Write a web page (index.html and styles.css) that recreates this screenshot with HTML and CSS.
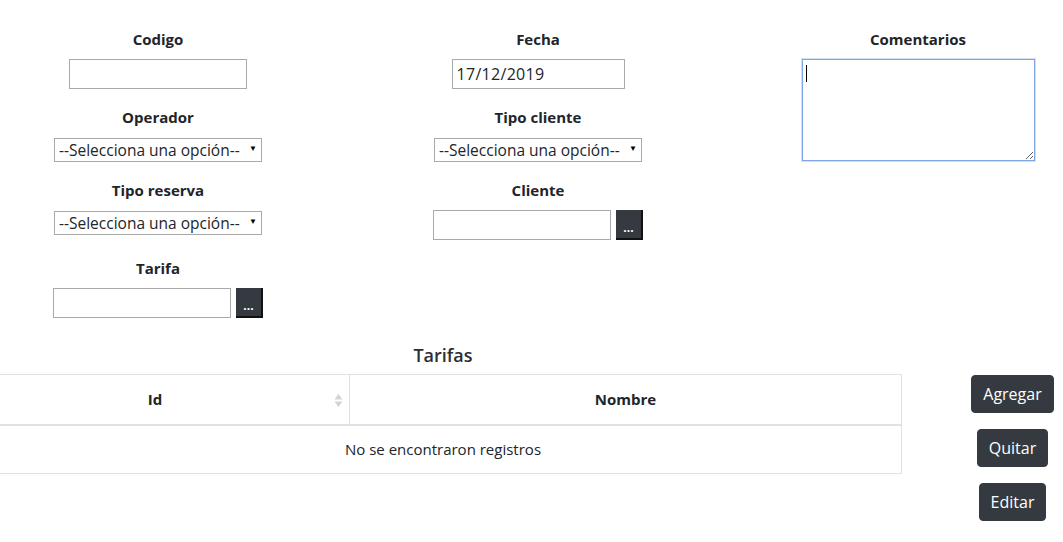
FILE: index.html
```html
<!DOCTYPE html>
<html lang="es">
<head>
<meta charset="utf-8">
<title>Reserva</title>
<link rel="stylesheet" href="styles.css">
</head>
<body>
<div class="page">
  <form class="form-grid">
    <div class="field c1 r1">
      <label class="lbl">Codigo</label>
      <input class="txt w178" type="text">
    </div>
    <div class="field c2 r1">
      <label class="lbl">Fecha</label>
      <input class="txt w173 date" type="text" value="17/12/2019">
    </div>
    <div class="field c3 rspan">
      <label class="lbl">Comentarios</label>
      <div class="ta-wrap">
        <textarea class="ta"></textarea>
        <span class="caret"></span>
      </div>
    </div>
    <div class="field c1 r2">
      <label class="lbl">Operador</label>
      <div class="sel-wrap">
        <select class="sel"><option>--Selecciona una opción--</option></select>
        <span class="arrow">&#9660;</span>
      </div>
    </div>
    <div class="field c2 r2">
      <label class="lbl">Tipo cliente</label>
      <div class="sel-wrap">
        <select class="sel"><option>--Selecciona una opción--</option></select>
        <span class="arrow">&#9660;</span>
      </div>
    </div>
    <div class="field c1 r3">
      <label class="lbl">Tipo reserva</label>
      <div class="sel-wrap">
        <select class="sel"><option>--Selecciona una opción--</option></select>
        <span class="arrow">&#9660;</span>
      </div>
    </div>
    <div class="field c2 r3">
      <label class="lbl">Cliente</label>
      <div class="group">
        <input class="txt w178" type="text">
        <button type="button" class="dots">...</button>
      </div>
    </div>
    <div class="field c1 r4">
      <label class="lbl">Tarifa</label>
      <div class="group">
        <input class="txt w178" type="text">
        <button type="button" class="dots">...</button>
      </div>
    </div>
  </form>

  <div class="lower">
    <div class="table-area">
      <h3 class="title">Tarifas</h3>
      <table class="tbl">
        <thead>
          <tr>
            <th class="th-id"><span>Id</span>
              <svg class="sort" width="9" height="15" viewBox="0 0 9 15"><path d="M4.5 1 L8.5 6.5 H0.5 Z" fill="#d4d4d4"/><path d="M4.5 14 L8.5 8.5 H0.5 Z" fill="#d4d4d4"/></svg>
            </th>
            <th class="th-name">Nombre</th>
          </tr>
        </thead>
        <tbody>
          <tr><td colspan="2" class="empty">No se encontraron registros</td></tr>
        </tbody>
      </table>
    </div>
    <div class="actions">
      <button type="button" class="btn">Agregar</button>
      <button type="button" class="btn">Quitar</button>
      <button type="button" class="btn">Editar</button>
    </div>
  </div>
</div>
</body>
</html>
```

FILE: styles.css
```css
* { box-sizing: border-box; }
html, body { margin: 0; padding: 0; overflow: hidden; background: #fff; }
body {
  font-family: "Open Sans", "Noto Sans", "Liberation Sans", sans-serif;
  color: #212529;
  font-size: 15px;
  width: 1063px;
  height: 542px;
}
.page { padding-top: 29px; }

.form-grid {
  display: grid;
  grid-template-columns: 380px 380px 380px;
  grid-template-rows: auto auto auto auto;
  row-gap: 18px;
  margin-left: -32px;
  width: 1140px;
}
.field { display: flex; flex-direction: column; align-items: center; }
.c1 { grid-column: 1; }
.c2 { grid-column: 2; }
.c3 { grid-column: 3; }
.r1 { grid-row: 1; }
.r2 { grid-row: 2; }
.r3 { grid-row: 3; }
.r4 { grid-row: 4; }
.rspan { grid-row: 1 / span 4; }

.lbl {
  font-weight: 700;
  font-size: 15px;
  line-height: 20px;
  height: 20px;
  margin-bottom: 10px;
  color: #212529;
}
.txt {
  height: 30px;
  border: 1px solid #a9a9a9;
  background: #fff;
  padding: 1px 5px;
  font-family: inherit;
  font-size: 15px;
  color: #212529;
  margin: 0;
}
.w178 { width: 178px; }
.w173 { width: 173px; }
.date { padding-left: 4px; font-size: 16px; letter-spacing: 0.3px; }

.ta-wrap { position: relative; width: 233px; height: 102px; }
.ta {
  width: 233px;
  height: 102px;
  border: 1px solid #7ea6e6;
  box-shadow: 0 0 0 1px rgba(126, 166, 230, 0.35);
  outline: none;
  margin: 0;
  padding: 2px;
  display: block;
  font-family: inherit;
}
.caret {
  position: absolute;
  left: 4px;
  top: 6px;
  width: 1px;
  height: 17px;
  background: #000;
}

.sel-wrap { position: relative; width: 208px; height: 24px; margin-top: 1px; }
.sel {
  appearance: none;
  -webkit-appearance: none;
  width: 208px;
  height: 24px;
  border: 1px solid #a9a9a9;
  border-radius: 0;
  background: #fff;
  font-family: inherit;
  font-size: 15.5px;
  color: #212529;
  padding: 0 0 0 4px;
  margin: 0;
  line-height: 22px;
}
.arrow {
  position: absolute;
  right: 5px;
  top: 5px;
  font-size: 8px;
  line-height: 10px;
  color: #000;
  pointer-events: none;
}

.group { display: flex; gap: 5px; align-items: stretch; }
.dots {
  width: 27px;
  height: 30px;
  background: #343a40;
  color: #fff;
  border: none;
  border-right: 2px solid #111;
  border-bottom: 2px solid #111;
  padding: 0;
  margin: 0;
  font-family: inherit;
  font-size: 12px;
  font-weight: 700;
  line-height: 12px;
  padding-top: 8px;
}

.lower {
  display: flex;
  margin-top: 25px;
}
.table-area {
  width: 918px;
  margin-left: -16px;
  flex: none;
}
.title {
  margin: 0 0 7px 0;
  text-align: center;
  font-size: 18px;
  font-weight: 600;
  line-height: 24px;
  height: 24px;
  color: #2a2e33;
}
.tbl {
  width: 918px;
  border-collapse: collapse;
  font-size: 15px;
}
.tbl th {
  border: 1px solid #dee2e6;
  border-bottom: 2px solid #dee2e6;
  height: 50px;
  padding: 0;
  font-weight: 700;
  text-align: center;
  vertical-align: middle;
  line-height: 24px;
}
.th-id { width: 365px; position: relative; padding-right: 24px !important; }
.sort { position: absolute; right: 6px; top: 18px; }
.tbl td {
  border: 1px solid #dee2e6;
  height: 49px;
  padding: 0;
  text-align: center;
  vertical-align: middle;
  line-height: 24px;
}

.actions {
  flex: 1;
  padding-left: 60px;
  padding-top: 32px;
  display: flex;
  flex-direction: column;
  align-items: center;
  gap: 16px;
}
.btn {
  background: #343a40;
  color: #fff;
  border: 1px solid #343a40;
  border-radius: 4px;
  padding: 6px 11px;
  font-family: inherit;
  font-size: 16px;
  line-height: 24px;
  height: 38px;
  margin: 0;
}
```
